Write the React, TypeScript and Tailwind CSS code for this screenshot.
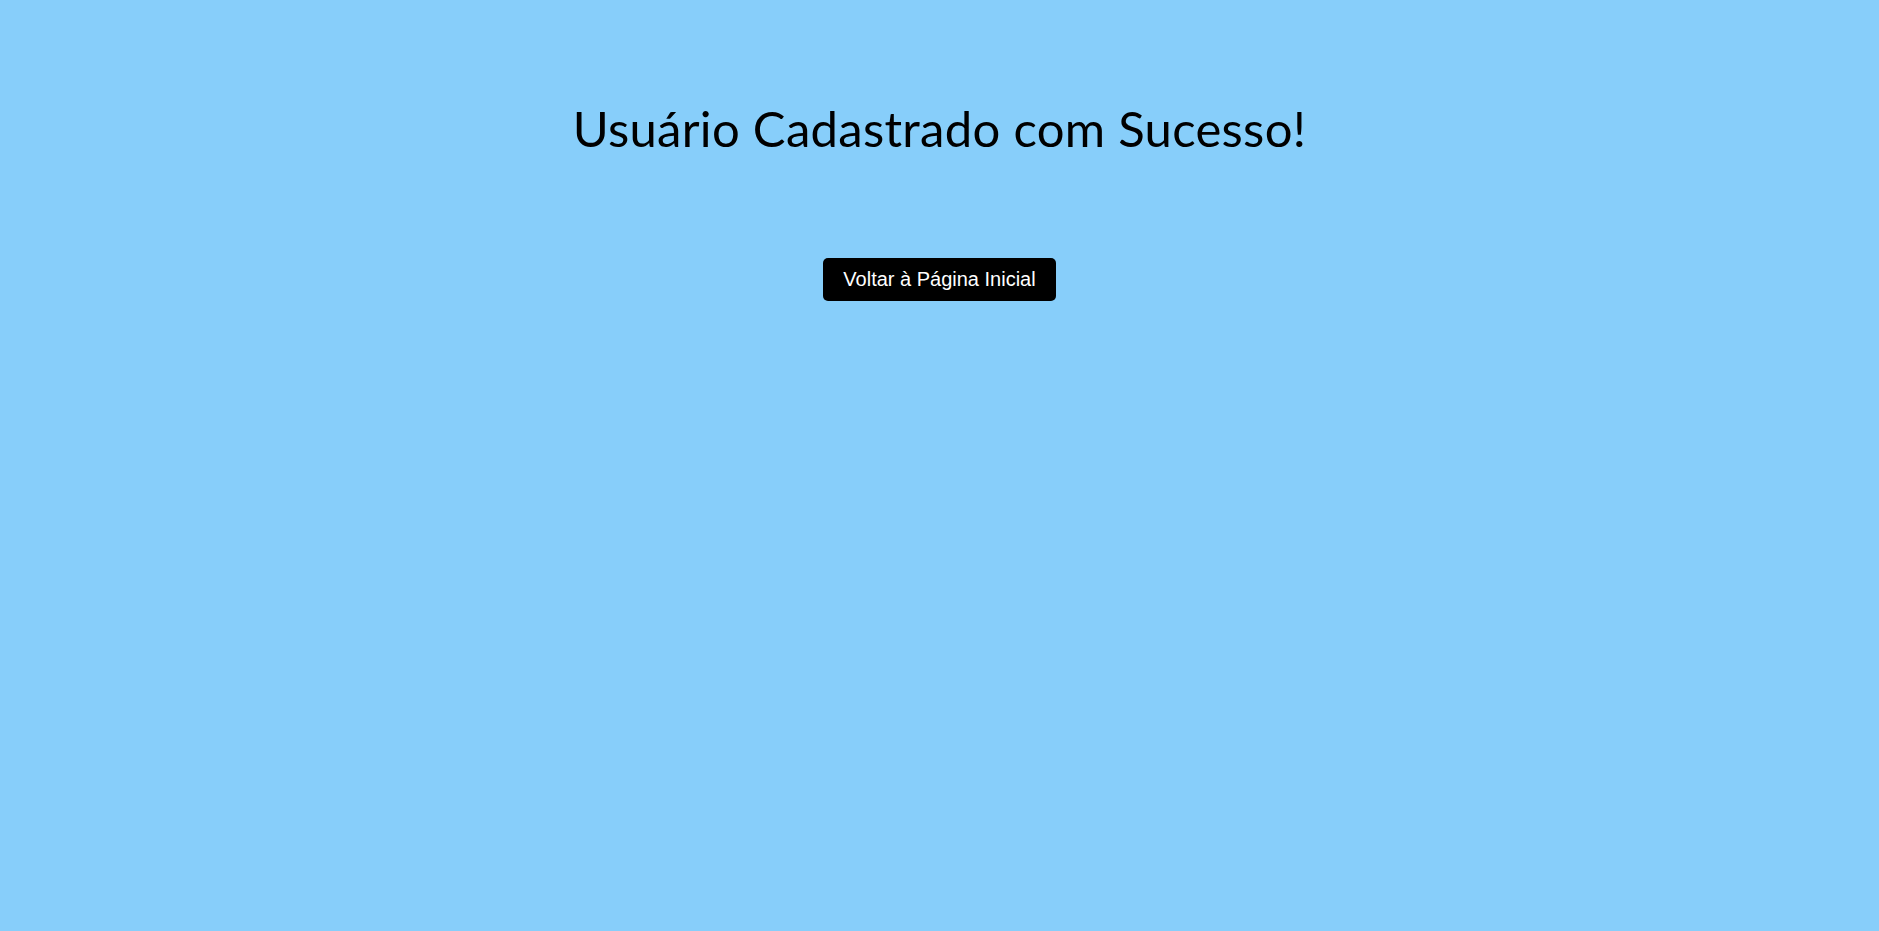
import React from "react";

export default function App() {
  return (
    <div className="min-h-[931px] w-full bg-[#87CEFA] text-center">
      <div className="pt-[96px] flex flex-col items-center">
        <h1 className="text-[49px] leading-[64px] tracking-[0.3px] text-black font-['Comic_Sans_MS','Lato',sans-serif] font-normal">
          Usuário Cadastrado com Sucesso!
        </h1>
        <button className="mt-[98px] bg-black text-white rounded-[5px] px-[20px] py-[10px] text-[20px] leading-[23px] font-['Liberation_Sans',Arial,sans-serif]">
          Voltar à Página Inicial
        </button>
      </div>
    </div>
  );
}
